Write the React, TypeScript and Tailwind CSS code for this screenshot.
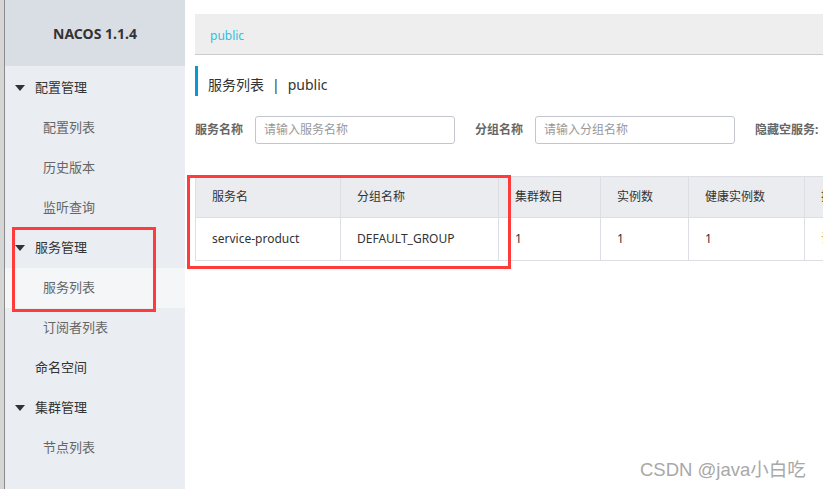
import React from "react";

const font = { fontFamily: '"Noto Sans", "Noto Sans CJK SC", sans-serif' };

function Tri() {
  return (
    <svg width="10" height="6" viewBox="0 0 10 6" className="mr-[10px]">
      <path d="M0 0 L10 0 L5 6 Z" fill="#333" />
    </svg>
  );
}

function MenuRow({ label, level, triangle, active }: { label: string; level: number; triangle?: boolean; active?: boolean }) {
  return (
    <div
      className={`h-[40px] flex items-center text-[13px] ${active ? "bg-[#f4f6f8]" : ""} ${
        level === 0 ? "text-[#333]" : "text-[#666]"
      }`}
      style={{ paddingLeft: triangle ? 10 : level === 0 ? 30 : 38 }}
    >
      {triangle && <Tri />}
      {label}
    </div>
  );
}

export default function App() {
  const cols = [
    { w: 145, h: "服务名", v: "service-product" },
    { w: 158, h: "分组名称", v: "DEFAULT_GROUP" },
    { w: 102, h: "集群数目", v: "1" },
    { w: 88, h: "实例数", v: "1" },
    { w: 116, h: "健康实例数", v: "1" },
    { w: 60, h: "操作", v: "详情" },
  ];
  return (
    <div className="w-[823px] h-[489px] flex bg-white overflow-hidden relative" style={font}>
      <div className="w-[5px] h-full bg-[#d6d6d6] border-r border-[#8a8a8a] shrink-0" />
      <div className="w-[180px] h-full bg-[#eaedf1] shrink-0 flex flex-col">
        <div className="h-[66px] bg-[#d9dde4] flex items-center justify-center text-[14px] font-bold text-[#333] shrink-0">
          NACOS 1.1.4
        </div>
        <div className="h-[2px]" />
        <MenuRow label="配置管理" level={0} triangle />
        <MenuRow label="配置列表" level={1} />
        <MenuRow label="历史版本" level={1} />
        <MenuRow label="监听查询" level={1} />
        <MenuRow label="服务管理" level={0} triangle />
        <MenuRow label="服务列表" level={1} active />
        <MenuRow label="订阅者列表" level={1} />
        <MenuRow label="命名空间" level={0} />
        <MenuRow label="集群管理" level={0} triangle />
        <MenuRow label="节点列表" level={1} />
      </div>
      <div className="flex-1 min-w-0 pl-[10px] pt-[14px] overflow-hidden">
        <div className="h-[41px] w-[700px] bg-[#eeeeee] border-b border-[#cccccc] flex items-center pl-[15px] pt-[3px] text-[12px] text-[#2fbfe0]">
          public
        </div>
        <div className="mt-[11px] h-[30px] border-l-[3px] border-[#0699d2] flex items-center pl-[10px] pt-[7px] text-[14px] text-[#333]">
          服务列表<span className="mx-[8px]">|</span>public
        </div>
        <div className="mt-[20px] flex items-center whitespace-nowrap">
          <span className="text-[12px] font-bold text-[#666] w-[60px]">服务名称</span>
          <div className="w-[200px] h-[28px] border border-[#c4c6cf] rounded-[3px] flex items-center pl-[8px] text-[12px] text-[#999]">
            请输入服务名称
          </div>
          <span className="text-[12px] font-bold text-[#666] w-[60px] ml-[20px]">分组名称</span>
          <div className="w-[200px] h-[28px] border border-[#c4c6cf] rounded-[3px] flex items-center pl-[8px] text-[12px] text-[#999]">
            请输入分组名称
          </div>
          <span className="text-[12px] font-bold text-[#666] ml-[20px]">隐藏空服务:</span>
        </div>
        <div className="mt-[32px] flex w-[700px] border-l border-t border-b border-[#dcdee3] text-[12px] text-[#333] whitespace-nowrap">
          {cols.map((c, i) => (
            <div key={i} className="flex flex-col shrink-0 border-r border-[#dcdee3]" style={{ width: c.w }}>
              <div className="h-[41px] bg-[#ebecf0] border-b border-[#dcdee3] flex items-center pl-[16px]">{c.h}</div>
              <div className={`h-[42px] flex items-center pl-[16px] ${i === 5 ? "text-[#f0a030]" : ""}`}>{c.v}</div>
            </div>
          ))}
        </div>
      </div>
      <div className="absolute left-[12px] top-[227px] w-[144px] h-[85px] border-[3px] border-[#ff3b3b]" />
      <div className="absolute left-[187px] top-[175px] w-[324px] h-[94px] border-[3px] border-[#ff3b3b]" />
      <div className="absolute left-[640px] top-[456px] text-[18.5px] text-[#a8a8a8]" style={{ fontFamily: '"Liberation Sans", "Noto Sans CJK SC", sans-serif' }}>
        CSDN @java小白吃
      </div>
    </div>
  );
}
